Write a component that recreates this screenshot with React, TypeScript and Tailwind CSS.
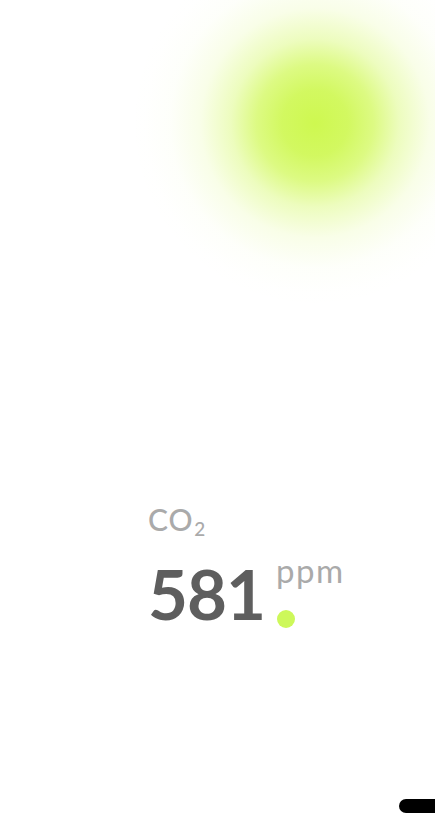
export default function App() {
  return (
    <div className="relative w-[435px] h-[838px] overflow-hidden bg-white flex flex-col" style={{ fontFamily: "Lato, 'Liberation Sans', sans-serif" }}>
      <div
        className="absolute left-[135px] top-[-57px] w-[360px] h-[360px] rounded-full"
        style={{ background: "radial-gradient(circle at center, rgba(206,248,80,1) 0%, rgba(208,248,88,0.95) 13%, rgba(212,249,100,0.8) 23%, rgba(220,250,130,0.52) 33%, rgba(232,251,170,0.27) 45%, rgba(242,253,210,0.11) 57%, rgba(250,254,235,0.03) 67%, rgba(255,255,255,0) 75%)" }}
      />
      <div className="relative flex flex-col pl-[148px] pt-[501px]">
        <div className="text-[30px] leading-[36px] text-[#aaaaaa] font-medium tracking-[0.8px]">
          CO<span className="text-[19px] relative top-[5px] ml-[1px]">2</span>
        </div>
        <div className="flex items-start mt-[17px]">
          <div className="text-[69px] leading-[70px] font-bold text-[#5e5e5e] tracking-[-1px]">581</div>
          <div className="flex flex-col ml-[11px]">
            <div className="text-[33px] leading-[28px] text-[#aaaaaa] -mt-[3px] tracking-[1.5px]">ppm</div>
            <div className="w-[18px] h-[18px] rounded-full bg-[#cdf85a] mt-[26px] ml-[1px]" />
          </div>
        </div>
      </div>
      <div className="flex-1" />
      <div className="flex justify-end mb-[25px]">
        <div className="w-[36px] h-[14px] bg-black rounded-l-full" />
      </div>
    </div>
  );
}
